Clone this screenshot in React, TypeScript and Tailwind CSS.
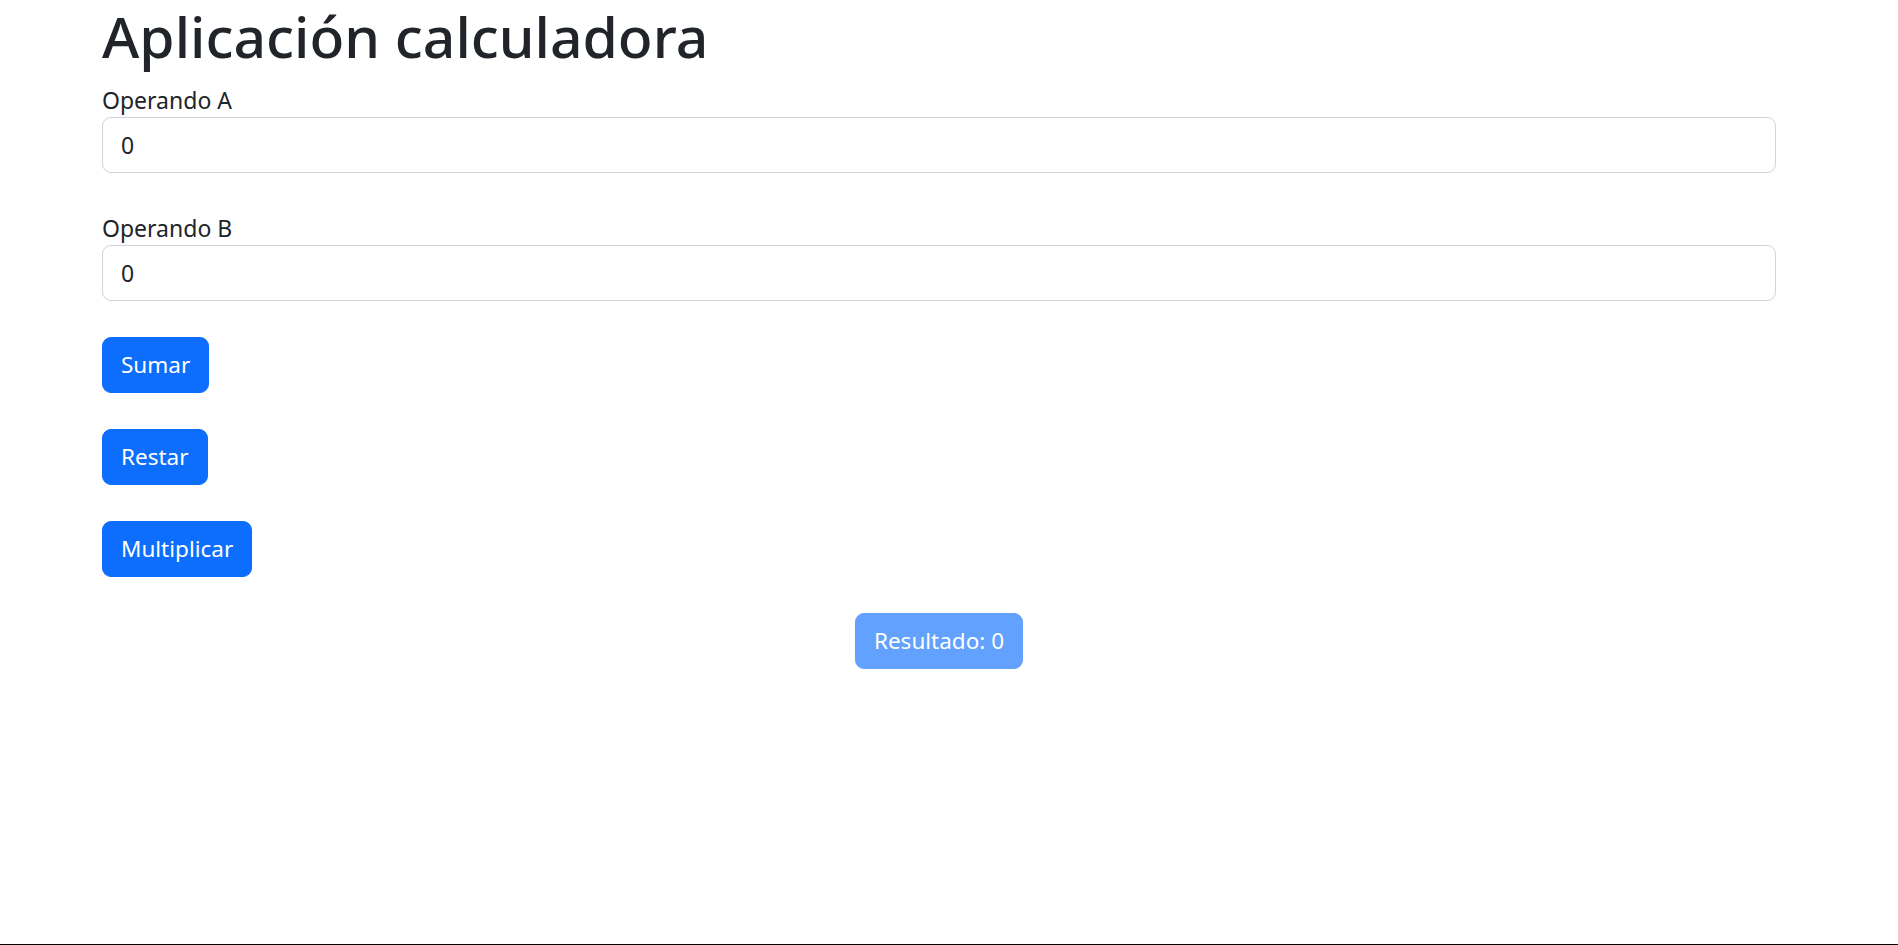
import React, { useState } from "react";

export default function App() {
  const [a, setA] = useState("0");
  const [b, setB] = useState("0");
  const [res, setRes] = useState(0);

  const btn =
    "self-start h-[56px] px-[18px] rounded-[9px] bg-[#0d6efd] text-white text-[22.5px] leading-[36px] border border-[#0d6efd]";

  return (
    <div
      className="h-[945px] box-border border-b border-black bg-white text-[#212529] pl-[102px] pr-[122px]"
      style={{ fontFamily: '"Noto Sans", "Open Sans", sans-serif' }}
    >
      <div className="flex flex-col">
        <h1 className="text-[57px] leading-[72px] font-medium mb-[12px]">
          Aplicación calculadora
        </h1>
        <label className="block text-[23px] leading-[33px]">Operando A</label>
        <input
          className="block w-full h-[56px] box-border px-[18px] py-[9px] text-[23px] leading-[36px] border border-[#ced4da] rounded-[9px] text-[#212529] mb-[39px] outline-none"
          value={a}
          onChange={(e) => setA(e.target.value)}
        />
        <label className="block text-[23px] leading-[33px]">Operando B</label>
        <input
          className="block w-full h-[56px] box-border px-[18px] py-[9px] text-[23px] leading-[36px] border border-[#ced4da] rounded-[9px] text-[#212529] mb-[36px] outline-none"
          value={b}
          onChange={(e) => setB(e.target.value)}
        />
        <button
          className={btn + " mb-[36px]"}
          onClick={() => setRes(Number(a) + Number(b))}
        >
          Sumar
        </button>
        <button
          className={btn + " mb-[36px]"}
          onClick={() => setRes(Number(a) - Number(b))}
        >
          Restar
        </button>
        <button
          className={btn + " mb-[36px]"}
          onClick={() => setRes(Number(a) * Number(b))}
        >
          Multiplicar
        </button>
        <div className="flex justify-center">
          <button
            disabled
            className="h-[56px] px-[18px] rounded-[9px] bg-[#62a1fe] border border-[#62a1fe] text-white text-[22.5px] leading-[36px]"
          >
            Resultado: {res}
          </button>
        </div>
      </div>
    </div>
  );
}
